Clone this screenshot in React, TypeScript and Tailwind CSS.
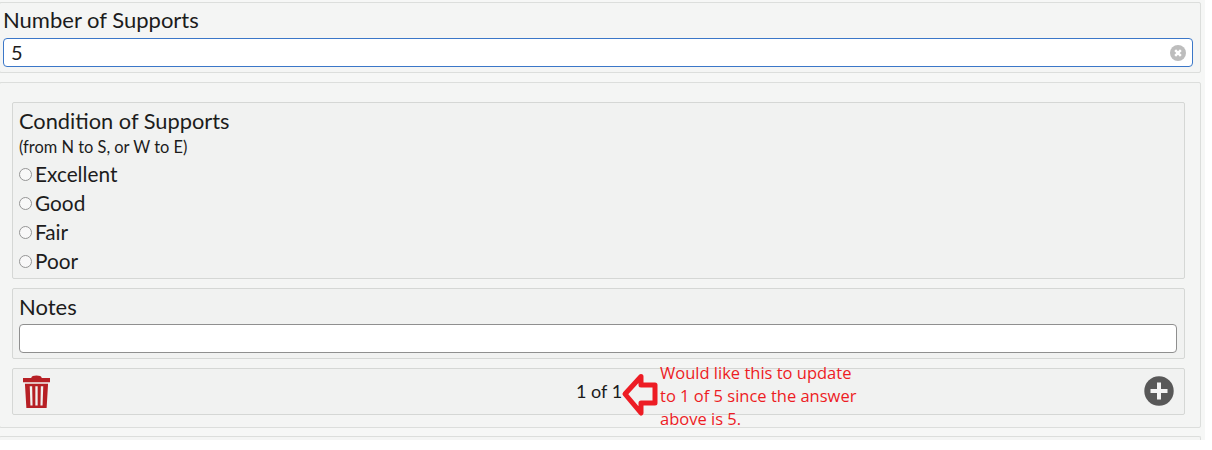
import React from "react";

const Radio = ({ label }: { label: string }) => (
  <div className="flex h-[29px] items-center">
    <span className="mt-[2px] h-[13px] w-[13px] rounded-full border-[1.500px] border-[#959595] bg-[#f8f8f8]" />
    <span className="ml-[3px] text-[20.800px] leading-[29px] text-[#1c1c1c]">{label}</span>
  </div>
);

export default function App() {
  return (
    <div className="h-[450px] w-[1212px] overflow-hidden bg-white font-['Lato','Noto_Sans',sans-serif] text-[#1c1c1c]">
      <div className="h-[440px] w-[1205px] bg-[#f6f7f6] pt-[2px]">
        <section className="ml-[-1px] h-[71px] w-[1202px] rounded-[2px] border border-[#dcdedc] bg-[#f4f5f4] pl-[3px] pr-[7px]">
          <div className="h-[35px] pt-[3px] text-[22px] leading-[28px]">Number of Supports</div>
          <div className="flex h-[29px] items-center justify-between rounded-[4px] border border-[#3b77c8] bg-white pl-[7px] pr-[6px]">
            <span className="mb-[2px] text-[20px] leading-[26px]">5</span>
            <svg width="16" height="16" viewBox="0 0 17 17">
              <circle cx="8.5" cy="8.5" r="8.5" fill="#bdbdbd" />
              <path d="M5.5 5.5l6 6M11.5 5.500l-6 6" stroke="#fff" strokeWidth="2.600" />
            </svg>
          </div>
        </section>

        <section className="ml-[-1px] mt-[9px] h-[346px] w-[1202px] rounded-[2px] border border-[#dcdedc] bg-[#f4f5f4] pl-[12px] pr-[15px] pt-[19px]">
          <div className="h-[177px] rounded-[2px] border border-[#d5d7d5] bg-[#f1f2f1] pl-[6px] pt-[4px]">
            <div className="text-[21.800px] leading-[28px]">Condition of Supports</div>
            <div className="mb-[1px] pt-[1px] text-[16.400px] leading-[22px]">(from N to S, or W to E)</div>
            <Radio label="Excellent" />
            <Radio label="Good" />
            <Radio label="Fair" />
            <Radio label="Poor" />
          </div>
          <div className="mt-[9px] h-[71px] rounded-[2px] border border-[#d5d7d5] bg-[#f1f2f1] pl-[6px] pr-[7px] pt-[4px]">
            <div className="h-[31px] text-[22px] leading-[28px]">Notes</div>
            <div className="h-[29px] rounded-[4px] border border-[#8f8f8f] bg-white" />
          </div>
          <div className="relative mt-[9px] flex h-[47px] items-center justify-between rounded-[2px] border border-[#d5d7d5] bg-[#f1f2f1] pl-[10px] pr-[10px]">
            <svg width="27" height="34" viewBox="0 0 28 34">
              <path
                fill="#b72025"
                fillRule="evenodd"
                d="M0 2.500h8.500C9 .8 10.800 0 14 0s5 .8 5.500 2.500H28V7H0zM2 8.500h24L24.500 33.500H3.500zM7 11l.7 20h2.200L9.500 11zM12.800 11v20h2.400V11zM18.500 11l-.4 20h2.200L21 11z"
              />
            </svg>
            <span className="absolute left-[563px] top-[9px] text-[18px] leading-[26px]">1 of 1</span>
            <svg className="mb-[2px]" width="30" height="30" viewBox="0 0 30 30">
              <circle cx="15" cy="15" r="14.700" fill="#585858" />
              <path d="M15 6.500v17M6.500 15h17" stroke="#f3f3f3" strokeWidth="4" />
            </svg>
          </div>
        </section>
        <div className="ml-[-1px] mt-[8px] h-[4px] w-[1202px] rounded-t-[2px] border border-b-0 border-[#dcdedc] bg-[#f4f5f4]" />
      </div>

      <svg
        className="absolute left-[620px] top-[372px]"
        width="40"
        height="46"
        viewBox="0 0 40 46"
        fill="none"
      >
        <path
          d="M21 4.500L5 22L21 41V31H35V13H21Z"
          stroke="#ed1c24"
          strokeWidth="5"
          strokeLinejoin="round"
        />
      </svg>
      <div className="absolute left-[660px] top-[361px] w-[215px] font-['Open_Sans',sans-serif] text-[16.500px] leading-[23px] text-[#ed1c24]">
        Would like this to update
        <br />
        to 1 of 5 since the answer
        <br />
        above is 5.
      </div>
    </div>
  );
}
